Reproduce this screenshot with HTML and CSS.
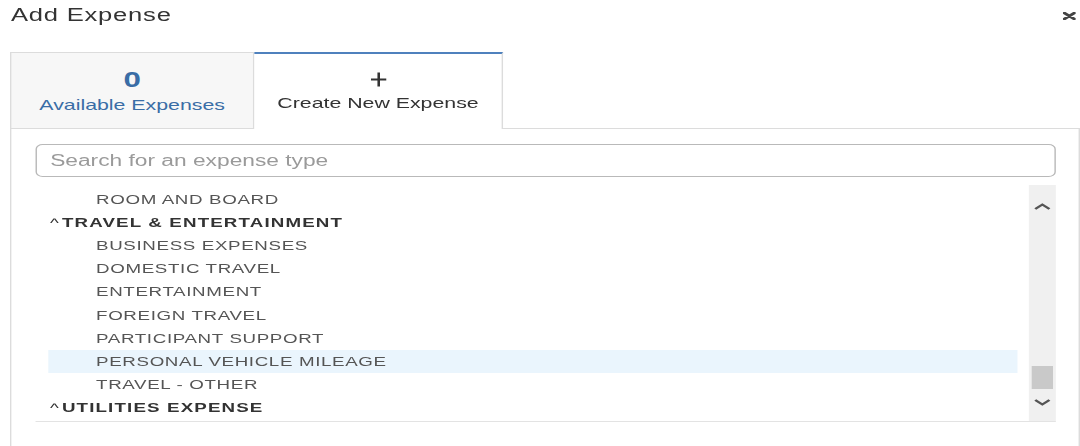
FILE: index.html
```html
<!DOCTYPE html>
<html lang="en">
<head>
<meta charset="utf-8">
<title>Add Expense</title>
<link rel="stylesheet" href="styles.css">
</head>
<body>
<div class="stage">
  <header class="modal-head">
    <h1 class="modal-title">Add Expense</h1>
    <button class="close" type="button" aria-label="Close">
      <svg width="9" height="8" viewBox="0 0 9 8"><path d="M1 1 L8 7 M8 1 L1 7" stroke="#444" stroke-width="2.4" fill="none" stroke-linecap="round"/></svg>
    </button>
  </header>
  <div class="panel">
    <div class="tabs">
      <div class="tab tab-avail">
        <div class="tab-icon count">0</div>
        <div class="tab-label">Available Expenses</div>
      </div>
      <div class="tab tab-new">
        <div class="tab-icon">
          <svg width="11" height="15" viewBox="0 0 11 15"><path d="M5.5 0.5 V14.5 M0 7.5 H11" stroke="#333" stroke-width="1.8" fill="none"/></svg>
        </div>
        <div class="tab-label">Create New Expense</div>
      </div>
      <div class="tab-fill"></div>
    </div>
    <div class="panel-body">
      <input class="search" type="text" placeholder="Search for an expense type">
      <div class="list-wrap">
        <ul class="list">
          <li class="item">ROOM AND BOARD</li>
          <li class="group"><span class="caret">^</span>TRAVEL &amp; ENTERTAINMENT</li>
          <li class="item">BUSINESS EXPENSES</li>
          <li class="item">DOMESTIC TRAVEL</li>
          <li class="item">ENTERTAINMENT</li>
          <li class="item">FOREIGN TRAVEL</li>
          <li class="item">PARTICIPANT SUPPORT</li>
          <li class="item hover">PERSONAL VEHICLE MILEAGE</li>
          <li class="item">TRAVEL - OTHER</li>
          <li class="group"><span class="caret">^</span>UTILITIES EXPENSE</li>
        </ul>
        <div class="scrollbar">
          <svg class="arrow arrow-up" width="13" height="7" viewBox="0 0 13 7"><path d="M1.5 6 L6.5 1.5 L11.5 6" stroke="#555" stroke-width="2" fill="none"/></svg>
          <div class="thumb"></div>
          <svg class="arrow arrow-down" width="13" height="7" viewBox="0 0 13 7"><path d="M1.5 1 L6.5 5.5 L11.5 1" stroke="#555" stroke-width="2" fill="none"/></svg>
        </div>
      </div>
    </div>
  </div>
</div>
</body>
</html>
```

FILE: styles.css
```css
html, body {
  margin: 0;
  padding: 0;
  background: #ffffff;
  overflow: hidden;
}

body {
  font-family: "Liberation Sans", Arial, sans-serif;
  color: #333;
}

.stage {
  width: 760px;
  height: 446px;
  display: flex;
  flex-direction: column;
  transform: scaleX(1.42105);
  transform-origin: 0 0;
}

.modal-head {
  height: 52px;
  flex: none;
  box-sizing: border-box;
  display: flex;
  justify-content: space-between;
  align-items: flex-start;
  padding: 4px 3.5px 0 7.7px;
}

.modal-title {
  margin: 0;
  font-size: 18px;
  line-height: 22px;
  font-weight: normal;
  letter-spacing: 0.55px;
  color: #333;
}

.close {
  margin-top: 8px;
  padding: 0;
  border: 0;
  background: none;
  width: 9px;
  height: 8px;
  display: block;
}

.close svg {
  display: block;
}

.panel {
  flex: 1;
  display: flex;
  flex-direction: column;
  margin-left: 7px;
}

.tabs {
  display: flex;
  height: 77px;
  flex: none;
}

.tab {
  box-sizing: border-box;
  height: 77px;
  display: flex;
  flex-direction: column;
  align-items: center;
  padding-top: 14px;
}

.tab-avail {
  width: 172px;
  background: #f7f7f7;
  border: 1px solid #dcdcdc;
  color: #3a6da6;
}

.tab-new {
  width: 175px;
  background: #fff;
  border-top: 2px solid #4f81bd;
  border-right: 1px solid #dcdcdc;
  padding-top: 13px;
  color: #333;
}

.tab-fill {
  flex: 1;
  border-bottom: 1px solid #dcdcdc;
}

.tab-icon {
  height: 22px;
  line-height: 22px;
  display: flex;
  align-items: center;
  justify-content: center;
}

.count {
  font-size: 22px;
  font-weight: bold;
  color: #3a6da6;
  padding-top: 2px;
}

.tab-new .tab-icon svg {
  display: block;
  margin-top: 3px;
}

.tab-label {
  margin-top: 5px;
  font-size: 15px;
  line-height: 18px;
  white-space: nowrap;
}

.panel-body {
  flex: 1;
  border-left: 1px solid #dcdcdc;
  border-right: 1px solid #dcdcdc;
  padding: 15px 16px 0 17.3px;
  display: flex;
  flex-direction: column;
}

.search {
  box-sizing: border-box;
  width: 100%;
  height: 33px;
  margin: 0;
  border: 1px solid #b9b9b9;
  border-radius: 5px;
  padding: 0 0 0 9px;
  font-family: "Liberation Sans", Arial, sans-serif;
  font-size: 16px;
  color: #333;
  background: #fff;
  outline: none;
}

.search::placeholder {
  color: #9a9a9a;
}

.list-wrap {
  margin-top: 8px;
  height: 237px;
  box-sizing: border-box;
  border-bottom: 1px solid #e3e3e3;
  display: flex;
}

.list {
  flex: 1;
  list-style: none;
  margin: 0;
  padding: 2.6px 7.7px 0 8.5px;
  overflow: hidden;
}

.list li {
  height: 23.2px;
  line-height: 23.2px;
  font-size: 13.2px;
  letter-spacing: 0.45px;
  white-space: nowrap;
}

.item {
  padding-left: 33.8px;
  color: #555;
}

.item.hover {
  background: #eaf5fd;
}

.group {
  padding-left: 1.4px;
  font-weight: bold;
  color: #333;
}

.list li.group {
  letter-spacing: 0.8px;
}

.caret {
  display: inline-block;
  width: 8.4px;
  font-weight: normal;
  letter-spacing: 0;
}

.scrollbar {
  width: 19.5px;
  flex: none;
  background: #f0f0f0;
  display: flex;
  flex-direction: column;
  align-items: center;
}

.arrow {
  display: block;
  flex: none;
}

.arrow-up {
  margin-top: 17.5px;
}

.thumb {
  width: 15.5px;
  height: 23.3px;
  margin-top: 156.5px;
  background: #c9c9c9;
  flex: none;
}

.arrow-down {
  margin-top: 10px;
}
```
